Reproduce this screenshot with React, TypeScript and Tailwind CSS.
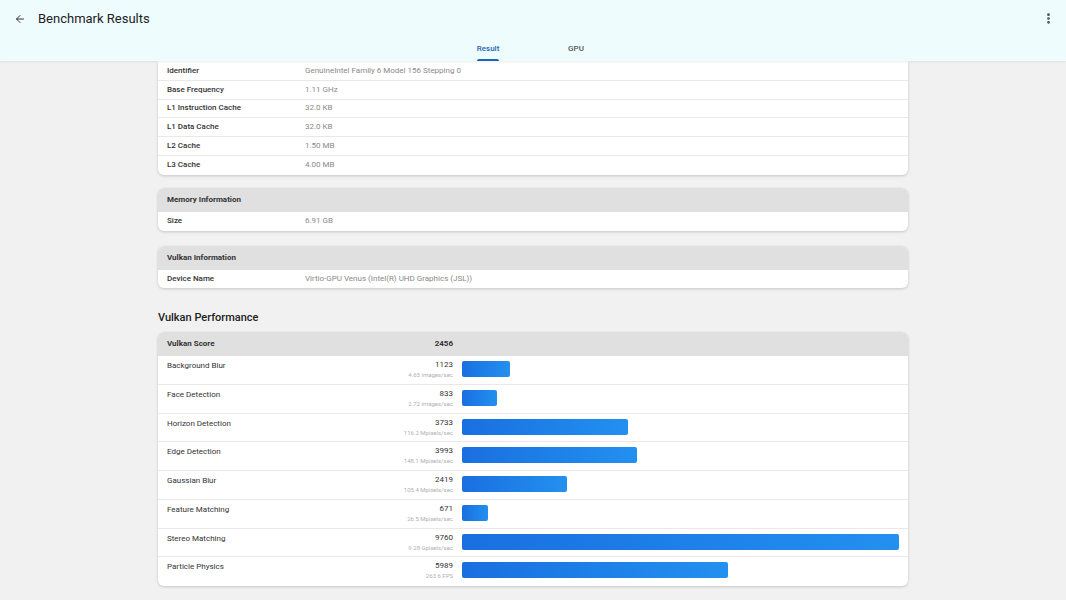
import { ArrowLeft, EllipsisVertical } from 'lucide-react'

const cpuRows = [
    ['Identifier', 'GenuineIntel Family 6 Model 156 Stepping 0'],
    ['Base Frequency', '1.11 GHz'],
    ['L1 Instruction Cache', '32.0 KB'],
    ['L1 Data Cache', '32.0 KB'],
    ['L2 Cache', '1.50 MB'],
    ['L3 Cache', '4.00 MB'],
]

// bar widths are in px of a 437px track, as the app draws them
const perfRows = [
    { name: 'Background Blur', score: 1123, rate: '4.65 images/sec', bar: 48 },
    { name: 'Face Detection', score: 833, rate: '2.72 images/sec', bar: 35 },
    { name: 'Horizon Detection', score: 3733, rate: '116.2 Mpixels/sec', bar: 166 },
    { name: 'Edge Detection', score: 3993, rate: '148.1 Mpixels/sec', bar: 175 },
    { name: 'Gaussian Blur', score: 2419, rate: '105.4 Mpixels/sec', bar: 105 },
    { name: 'Feature Matching', score: 671, rate: '26.5 Mpixels/sec', bar: 26 },
    { name: 'Stereo Matching', score: 9760, rate: '9.28 Gpixels/sec', bar: 437 },
    { name: 'Particle Physics', score: 5989, rate: '263.6 FPS', bar: 266 },
]

function InfoRow({ label, value, last }: { label: string; value: string; last?: boolean }) {
    return (
        <div className={`flex items-center h-[18.8px] px-[9px] ${last ? '' : 'border-b border-[#e8e8e8]'}`}>
            <span className="w-[138px] text-[8px] font-medium text-[#333]">{label}</span>
            <span className="text-[8px] text-[#8a8a8a]">{value}</span>
        </div>
    )
}

function InfoCard({ title, rows }: { title: string; rows: string[][] }) {
    return (
        <div className="bg-white rounded-[6px] shadow-[0_1px_3px_rgba(0,0,0,0.18)] overflow-hidden">
            <div className="flex items-center h-[24px] px-[9px] bg-[#e0e0e0]">
                <span className="text-[8px] font-bold text-[#333]">{title}</span>
            </div>
            {rows.map(([l, v], i) => (
                <InfoRow key={l} label={l} value={v} last={i === rows.length - 1} />
            ))}
        </div>
    )
}

export default function App() {
    return (
        <div className="w-[1066px] h-[600px] overflow-hidden bg-[#f1f1f1] flex flex-col font-['Roboto',sans-serif]">
            {/* Top bar */}
            <div className="relative z-10 h-[61px] shrink-0 bg-[#effcfe] shadow-[0_1px_2px_rgba(0,0,0,0.08)] flex flex-col">
                <div className="flex items-center h-[37px] px-[14px]">
                    <ArrowLeft className="w-[12px] h-[12px] text-[#333]" strokeWidth={2} />
                    <span className="ml-[12px] text-[13px] text-[#222]">Benchmark Results</span>
                    <EllipsisVertical className="ml-auto mr-[-3px] w-[13px] h-[13px] text-[#444]" strokeWidth={3} />
                </div>
                <div className="flex justify-center pr-[2px] mt-auto">
                    <div className="w-[88px] flex flex-col items-center">
                        <span className="text-[8px] font-medium text-[#1a66b8] leading-none">Result</span>
                        <div className="mt-[6px] w-[22px] h-[2px] rounded-t bg-[#1a66b8]" />
                    </div>
                    <div className="w-[88px] flex flex-col items-center">
                        <span className="text-[8px] font-medium text-[#555] leading-none">GPU</span>
                        <div className="mt-[6px] h-[2px]" />
                    </div>
                </div>
            </div>

            {/* Content */}
            <div className="w-[750px] ml-[158px] flex flex-col">
                <div className="pt-[1px] bg-white rounded-b-[6px] shadow-[0_1px_3px_rgba(0,0,0,0.18)]">
                    {cpuRows.map(([l, v], i) => (
                        <InfoRow key={l} label={l} value={v} last={i === cpuRows.length - 1} />
                    ))}
                </div>

                <div className="mt-[13px]">
                    <InfoCard title="Memory Information" rows={[['Size', '6.91 GB']]} />
                </div>
                <div className="mt-[15px]">
                    <InfoCard title="Vulkan Information" rows={[['Device Name', 'Virtio-GPU Venus (Intel(R) UHD Graphics (JSL))']]} />
                </div>

                <h2 className="mt-[23px] text-[11px] font-medium text-[#222] leading-[14px]">Vulkan Performance</h2>

                <div className="mt-[7px] bg-white rounded-[6px] shadow-[0_1px_3px_rgba(0,0,0,0.18)] overflow-hidden">
                    <div className="flex items-center h-[24px] bg-[#e0e0e0]">
                        <span className="pl-[9px] w-[138px] text-[8px] font-bold text-[#333]">Vulkan Score</span>
                        <span className="w-[157px] text-right text-[8px] font-bold text-[#333]">2456</span>
                    </div>
                    {perfRows.map((r, i) => (
                        <div
                            key={r.name}
                            className={`flex h-[28.7px] ${i === perfRows.length - 1 ? '' : 'border-b border-[#e8e8e8]'}`}
                        >
                            <span className="pl-[9px] pt-[4px] w-[138px] text-[8px] text-[#333]">{r.name}</span>
                            <div className="w-[157px] pt-[4px] flex flex-col items-end">
                                <span className="text-[8px] text-[#333] leading-[10px]">{r.score}</span>
                                <span className="text-[6px] text-[#b0b0b0] leading-[9px]">{r.rate}</span>
                            </div>
                            <div className="ml-[9px] flex-1 pr-[9px] pt-[5px]">
                                <div
                                    className="h-[16px] rounded-[2px] bg-gradient-to-r from-[#1a6fe0] to-[#2390ef]"
                                    style={{ width: `${r.bar}px` }}
                                />
                            </div>
                        </div>
                    ))}
                </div>
            </div>
        </div>
    )
}
